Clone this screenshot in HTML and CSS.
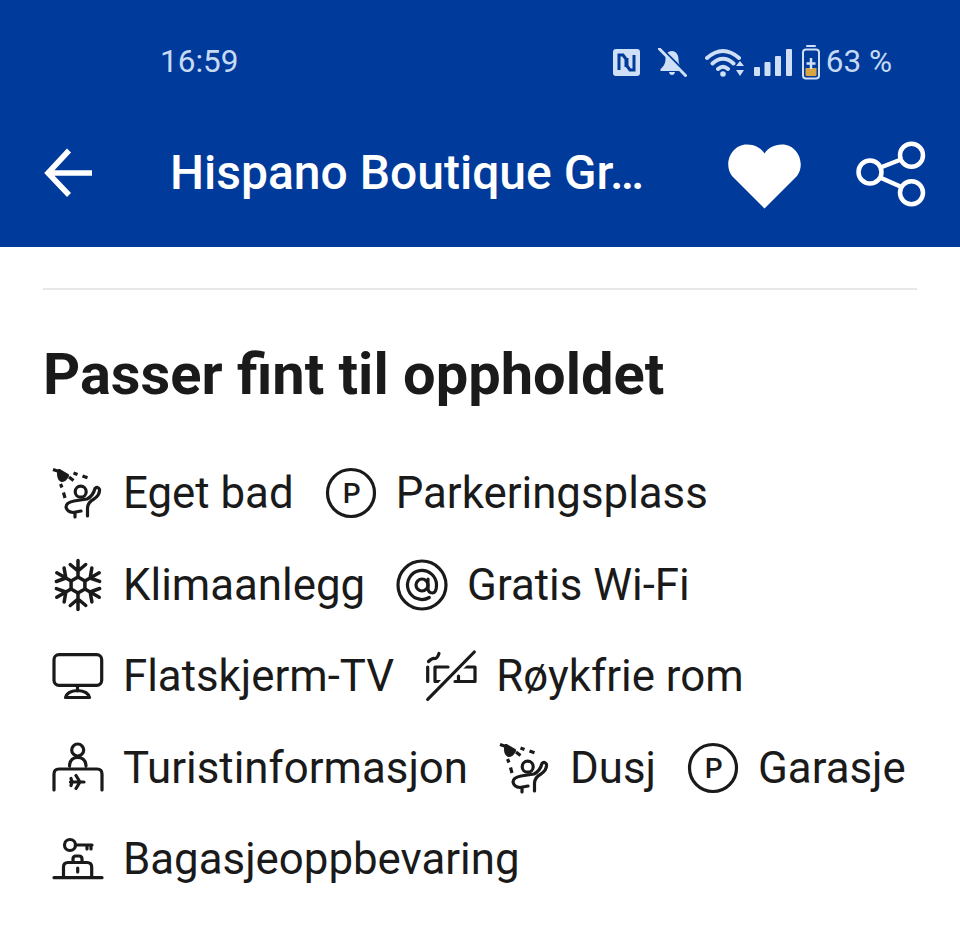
FILE: index.html
```html
<!DOCTYPE html>
<html>
<head>
    <title>Hispano Boutique Gr…</title>
    <link rel="stylesheet" href="styles.css">
</head>
<body>
    <svg class="defs" width="0" height="0">
        <symbol id="i-shower" viewBox="8 7 60 60">
            <path class="fill" d="M19 14.5 L27.5 19.5 Q25 24.5 21.5 24.5 Q17.5 22 19 14.5 Z"/>
            <path class="dashes" d="M13 13.500 L19 15.500 M33.500 17 L37.500 18.500 M42.500 20 L47.500 21.800 M29 21 L33.500 24.500 M20.500 28 L22 31.500 M23.500 36.500 L25 42"/>
            <circle cx="40.7" cy="35.7" r="5.5"/>
            <path d="M47.5 60 V52 Q48 46 54 43 Q60 39 59.5 33.5 Q58 30 55 32.5 Q53 40 47 43 L34 45 Q26 46.5 26 51 Q27 56 33 56.5 L41 55 M35 57 V61"/>
        </symbol>
    </svg>

    <header class="topbar">
        <div class="statusbar">
            <span class="clock">16:59</span>
            <div class="status-icons">
                <svg class="st-nfc" width="27" height="27" viewBox="0 0 27 27">
                    <rect class="st-fill" width="27" height="27" rx="3"/>
                    <path class="st-cut" d="M6 21 V6 H10 L13 10 V18 M21 6 V21 H17 L14 17 V9"/>
                </svg>
                <svg class="st-bell" width="29" height="29" viewBox="0 0 29 29">
                    <path class="st-fill" d="M14 3 C9 3 7.500 7 7.500 11 C7.500 16 5 19 2.500 21 V23 H25 V21 C22.500 19 20.500 16 20.500 11 C20.500 7 18 3 14 3 Z M11 24 H17 Q16.500 27 14 27 Q11.500 27 11 24 Z"/>
                    <path class="st-cutline" d="M1.500 -1 L29 26"/>
                    <path class="st-line bell-slash" d="M1 0.500 L27.500 27.500"/>
                </svg>
                <svg class="st-wifi" width="40" height="29" viewBox="0 0 40 29">
                    <path class="st-line" d="M2 10 Q18 -4 34 10 M7.500 15.500 Q18 6 28.500 15.500 M13 21 Q18 16.500 23 21"/>
                    <circle class="st-fill" cx="18" cy="26" r="2.800"/>
                    <path class="st-fill" d="M35 13 L39 18 H31 Z M35 28 L39 22 H31 Z"/>
                </svg>
                <svg class="st-signal" width="38" height="27" viewBox="0 0 38 27">
                    <rect class="st-fill" x="0" y="18" width="6" height="9" rx="1"/>
                    <rect class="st-fill" x="10.500" y="13" width="6" height="14" rx="1"/>
                    <rect class="st-fill" x="21" y="7" width="6" height="20" rx="1"/>
                    <rect class="st-fill" x="32" y="0" width="6" height="27" rx="1"/>
                </svg>
                <svg class="st-battery" width="18" height="35" viewBox="0 0 18 35">
                    <path class="st-line thin" d="M5 1 H13"/>
                    <rect class="st-line thin" x="1" y="4.500" width="16" height="29" rx="3"/>
                    <path class="st-amber" d="M3.500 23 H14.500 V29.500 Q14.500 31 13 31 H5 Q3.500 31 3.500 29.500 Z"/>
                    <path class="st-line thick" d="M9 13 V24 M4.500 18.500 H13.500"/>
                </svg>
                <span class="battery-text">63 %</span>
            </div>
        </div>
        <div class="navbar">
            <svg class="nav-back" width="60" height="60" viewBox="0 0 60 60">
                <path d="M27 7.500 L6 30 L27 52 M6 30 H50"/>
            </svg>
            <h1 class="nav-title">Hispano Boutique Gr…</h1>
            <svg class="nav-heart" width="75" height="65" viewBox="0 0 75 65">
                <path d="M37.500 64.500 L5 32 C-4 20 4 0.500 20 0.500 C28 0.500 34 4 37.500 9.500 C41 4 47 0.500 55 0.500 C71 0.500 79 20 70 32 Z"/>
            </svg>
            <svg class="nav-share" width="72" height="72" viewBox="0 0 72 72">
                <circle cx="15" cy="35" r="11.500"/>
                <circle cx="56.500" cy="18.300" r="11.500"/>
                <circle cx="56.500" cy="55.700" r="11.500"/>
                <path d="M25.500 30.500 L46 22.500 M25 40.500 L46.500 50"/>
            </svg>
        </div>
    </header>

    <main class="content">
        <hr class="divider">
        <h2 class="section-title">Passer fint til oppholdet</h2>
        <ul class="amenities">
            <li class="amenity">
                <svg class="icon"><use href="#i-shower"/></svg>
                <span>Eget bad</span>
            </li>
            <li class="amenity">
                <svg class="icon" viewBox="6.700 2.300 60 60">
                    <circle cx="36.700" cy="32.300" r="23.500"/>
                    <text class="p-letter" x="37.500" y="42.500" text-anchor="middle">P</text>
                </svg>
                <span>Parkeringsplass</span>
            </li>
            <li class="amenity">
                <svg class="icon flake" viewBox="7.300 6 60 60">
                    <path d="M37.300 28 L44.200 32 V40 L37.300 44 L30.400 40 V32 Z"/>
                    <path d="M37.300 28 V11.500 M29.500 15.500 L37.300 22 L45 15.500"/>
                    <path transform="rotate(60 37.300 36)" d="M37.300 28 V11.500 M29.500 15.500 L37.300 22 L45 15.500"/>
                    <path transform="rotate(120 37.300 36)" d="M37.300 28 V11.500 M29.500 15.500 L37.300 22 L45 15.500"/>
                    <path transform="rotate(180 37.300 36)" d="M37.300 28 V11.500 M29.500 15.500 L37.300 22 L45 15.500"/>
                    <path transform="rotate(240 37.300 36)" d="M37.300 28 V11.500 M29.500 15.500 L37.300 22 L45 15.500"/>
                    <path transform="rotate(300 37.300 36)" d="M37.300 28 V11.500 M29.500 15.500 L37.300 22 L45 15.500"/>
                </svg>
                <span>Klimaanlegg</span>
            </li>
            <li class="amenity">
                <svg class="icon" viewBox="2.700 4 60 60">
                    <circle cx="32.700" cy="34" r="24"/>
                    <circle cx="32.700" cy="34" r="6"/>
                    <path d="M38.700 28 V37.500 Q39 42 43 42 Q47.200 42 47.200 34 A14.500 14.500 0 1 0 40 46.500"/>
                </svg>
                <span>Gratis Wi-Fi</span>
            </li>
            <li class="amenity">
                <svg class="icon" viewBox="8 4 60 60">
                    <rect x="14" y="12.700" width="47.700" height="30.600" rx="5"/>
                    <path d="M37.500 43.500 V49 M25.500 55.500 Q27 49 37.500 48.500 Q48 49 49.500 55.500 Z"/>
                </svg>
                <span>Flatskjerm-TV</span>
            </li>
            <li class="amenity">
                <svg class="icon" viewBox="6 4 60 60">
                    <path d="M13.500 19.500 Q17 16 19.500 16.500 Q22 17 24 11.500 M12.700 25 V39.500 M33 25 H20 V39.500 H25 M44 25 H60 V39.500 H40 M43.500 34 V39"/>
                    <path class="slash-gap" d="M12.700 57.300 L59.300 10"/>
                    <path d="M12.700 57.300 L59.300 10"/>
                </svg>
                <span>Røykfrie rom</span>
            </li>
            <li class="amenity">
                <svg class="icon" viewBox="8 4 60 60">
                    <circle cx="37.700" cy="16" r="6"/>
                    <path d="M29.500 32 Q30 23.500 37.700 23.500 Q45.500 23.500 46 32 M14 56 V40 Q14 35 19 35 H57 Q62 35 62 40 V56 M30.500 48 H44 M36 41.500 L40 48 L36 54.500 M31 44.500 L32 48 L31 51.500"/>
                </svg>
                <span>Turistinformasjon</span>
            </li>
            <li class="amenity">
                <svg class="icon"><use href="#i-shower"/></svg>
                <span>Dusj</span>
            </li>
            <li class="amenity">
                <svg class="icon" viewBox="6.700 2.300 60 60">
                    <circle cx="36.700" cy="32.300" r="23.500"/>
                    <text class="p-letter" x="37.500" y="42.500" text-anchor="middle">P</text>
                </svg>
                <span>Garasje</span>
            </li>
            <li class="amenity">
                <svg class="icon" viewBox="8 4 60 60">
                    <circle cx="30" cy="20" r="5.500"/>
                    <path d="M35.500 20 H52 M47 20 V24 M51 20 V24 M14 52.700 H62 M23.500 52.700 V42 Q23.500 37.500 28 37.500 H47 Q51.700 37.500 51.700 42 V52.700 M33 37 V34 Q33 31 36 31 H39 Q42 31 42 34 V37 M37.700 43 V47"/>
                </svg>
                <span>Bagasjeoppbevaring</span>
            </li>
        </ul>
    </main>
</body>
</html>
```

FILE: styles.css
```css
* {
    box-sizing: border-box;
}
html, body {
    margin: 0;
    padding: 0;
}
body {
    width: 960px;
    height: 937px;
    overflow: hidden;
    background-color: #FFFFFF;
    color: #1A1A1A;
    font-family: Roboto, "Liberation Sans", sans-serif;
}
.defs {
    display: block;
    height: 0;
}

/* blue top part */
.topbar {
    height: 247px;
    background-color: #003A9A;
    color: #FFFFFF;
}
.statusbar {
    height: 110px;
    padding: 40px 68px 0 160px;
    display: flex;
    justify-content: space-between;
    align-items: flex-start;
    color: #C6DAF4;
    font-size: 31.500px;
    line-height: 44px;
}
.status-icons {
    display: flex;
    align-items: center;
    height: 44px;
}
.st-fill {
    fill: #CFDFF5;
}
.st-cut {
    fill: none;
    stroke: #003A9A;
    stroke-width: 3;
}
.st-line {
    fill: none;
    stroke: #CFDFF5;
    stroke-width: 4;
    stroke-linecap: round;
}
.st-line.thin {
    stroke-width: 2;
}
.st-line.thick {
    stroke-width: 2.500;
    stroke-linecap: butt;
}
.st-line.bell-slash {
    stroke-width: 3;
}
.st-cutline {
    fill: none;
    stroke: #003A9A;
    stroke-width: 3;
}
.st-amber {
    fill: #D9A441;
}
.st-bell {
    margin-left: 18px;
}
.st-wifi {
    margin-left: 18px;
}
.st-signal {
    margin-left: 9px;
}
.st-battery {
    margin-left: 10px;
}
.battery-text {
    margin-left: 6px;
}
.navbar {
    height: 125px;
    display: flex;
    align-items: center;
    padding-left: 42px;
}
.nav-title {
    margin: 0 0 0 68px;
    width: 557px;
    font-size: 48px;
    font-weight: 500;
    line-height: 60px;
    white-space: nowrap;
}
.nav-back path {
    fill: none;
    stroke: #FFFFFF;
    stroke-width: 5.500;
}
.nav-heart {
    margin-top: 8px;
}
.nav-heart path {
    fill: #FFFFFF;
}
.nav-share {
    margin-left: 53px;
}
.nav-share circle, .nav-share path {
    fill: none;
    stroke: #FFFFFF;
    stroke-width: 4.500;
}

/* white part */
.content {
    padding: 0 43px;
}
.divider {
    margin: 41px 0 0;
    border: 0;
    height: 2px;
    background-color: #E7E7E7;
}
.section-title {
    margin: 50px 0 0;
    font-size: 57.800px;
    font-weight: 700;
    line-height: 68px;
}
.amenities {
    list-style: none;
    margin: 55px 0 0;
    padding: 0 0 0 5px;
    display: flex;
    flex-wrap: wrap;
    column-gap: 27px;
    row-gap: 31.500px;
}
.amenity {
    display: flex;
    align-items: center;
    gap: 15px;
    height: 60px;
    font-size: 43.800px;
}
.icon {
    width: 60px;
    height: 60px;
    flex: none;
    fill: none;
    stroke: #1A1A1A;
    stroke-width: 3.200;
    stroke-linejoin: round;
    stroke-linecap: round;
}
.flake {
    stroke-width: 3.500;
}
.dashes {
    stroke-linecap: butt;
}
.slash-gap {
    stroke: #FFFFFF;
    stroke-width: 8;
}
.fill {
    fill: #1A1A1A;
}
.p-letter {
    fill: #1A1A1A;
    stroke: none;
    font-family: Roboto, sans-serif;
    font-size: 28px;
    font-weight: 500;
}
```
